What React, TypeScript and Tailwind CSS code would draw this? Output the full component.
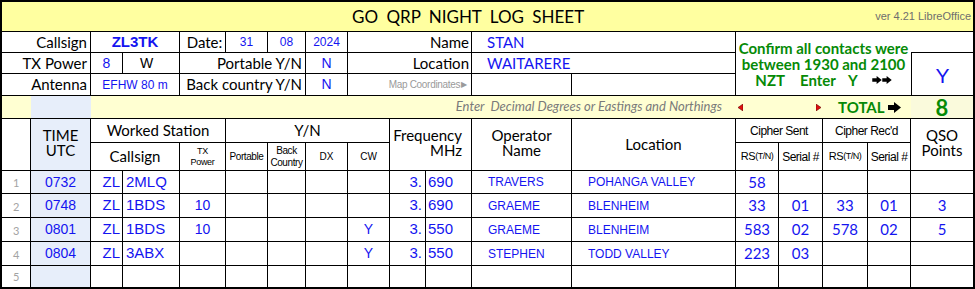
import React from 'react';

const CAL = "font-['Lato','Open_Sans',sans-serif]";
const ARIAL = "font-['Liberation_Sans','Arial',sans-serif]";
const line = 'border-r border-b border-black';
const blue = 'text-[#1414f0]';
const green = 'text-[#068a06]';
const bandBg = 'bg-[#ffffd2]';
const timeBg = 'bg-[#e7eefa]';

// Log entries - row 5 is left blank on the sheet
const rows = [
  { n: 1, time: '0732', call: '2MLQ', tx: '', cw: '', f: '690', op: 'TRAVERS', loc: 'POHANGA VALLEY', rs: '58', ss: '', rr: '', sr: '', pts: '' },
  { n: 2, time: '0748', call: '1BDS', tx: '10', cw: '', f: '690', op: 'GRAEME', loc: 'BLENHEIM', rs: '33', ss: '01', rr: '33', sr: '01', pts: '3' },
  { n: 3, time: '0801', call: '1BDS', tx: '10', cw: 'Y', f: '550', op: 'GRAEME', loc: 'BLENHEIM', rs: '583', ss: '02', rr: '578', sr: '02', pts: '5' },
  { n: 4, time: '0804', call: '3ABX', tx: '', cw: 'Y', f: '550', op: 'STEPHEN', loc: 'TODD VALLEY', rs: '223', ss: '03', rr: '', sr: '', pts: '' },
  { n: 5, time: '', call: '', tx: '', cw: '', f: '', op: '', loc: '', rs: '', ss: '', rr: '', sr: '', pts: '' },
];

const rowStart = ['row-start-8', 'row-start-9', 'row-start-10', 'row-start-11', 'row-start-12'];

function Arrow({ w = 13, h = 11 }: { w?: number; h?: number }) {
  return (
    <svg width={w} height={h} viewBox="0 0 13 11" className="inline-block">
      <polygon points="0,3 6,3 6,0 13,5.5 6,11 6,8 0,8" fill="#000" />
    </svg>
  );
}

function Tri({ dir }: { dir: 'l' | 'r' }) {
  return (
    <svg width="5" height="7" viewBox="0 0 5 7">
      <polygon
        points={dir === 'l' ? '5,0 0,3.5 5,7' : '0,0 5,3.5 0,7'}
        fill="#e01010"
        stroke="#600"
        strokeWidth="0.6"
      />
    </svg>
  );
}

export default function App() {
  return (
    <div className="w-[975px] h-[289px] bg-white border-2 border-black">
      <div className="grid grid-cols-[29px_60px_32px_57px_46px_42px_38px_42px_42px_36px_46px_100px_164px_43px_44px_45px_43px_62px] grid-rows-[30px_21px_21px_22px_23px_24px_28px_23px_24px_24px_24px_21px]">
        {/* Title */}
        <div className="col-start-1 col-end-19 row-start-1 flex items-center border-b border-black bg-[#ffffa0]">
          <span className={`${CAL} pl-[350px] text-[17px] [word-spacing:4px] text-black`}>
            GO QRP NIGHT LOG SHEET
          </span>
          <span className={`${ARIAL} ml-auto pr-[2px] text-[11px] text-[#6e6e6e]`}>ver 4.21 LibreOffice</span>
        </div>

        {/* Header block: row 1 */}
        <div className={`col-start-1 col-end-3 row-start-2 ${line} ${CAL} flex items-center justify-end pr-[3px] text-[15px]`}>Callsign</div>
        <div className={`col-start-3 col-end-5 row-start-2 ${line} ${ARIAL} ${blue} flex items-center justify-center text-[15px] font-bold`}>ZL3TK</div>
        <div className={`col-start-5 col-end-6 row-start-2 ${line} ${CAL} flex items-center justify-center pl-[4px] text-[15px]`}>Date:</div>
        <div className={`col-start-6 col-end-7 row-start-2 ${line} ${ARIAL} ${blue} flex items-center justify-center text-[12px]`}>31</div>
        <div className={`col-start-7 col-end-8 row-start-2 ${line} ${ARIAL} ${blue} flex items-center justify-center text-[12px]`}>08</div>
        <div className={`col-start-8 col-end-9 row-start-2 ${line} ${ARIAL} ${blue} flex items-center justify-center text-[12px]`}>2024</div>
        <div className={`col-start-9 col-end-12 row-start-2 ${line} ${CAL} flex items-center justify-end pr-[2px] text-[15px]`}>Name</div>
        <div className={`col-start-12 col-end-14 row-start-2 ${line} ${CAL} ${blue} flex items-center pl-[15px] text-[15px]`}>STAN</div>

        {/* row 2 */}
        <div className={`col-start-1 col-end-3 row-start-3 ${line} ${CAL} flex items-center justify-end pr-[3px] text-[15px]`}>TX Power</div>
        <div className={`col-start-3 col-end-4 row-start-3 ${line} ${ARIAL} ${blue} flex items-center justify-center text-[14px]`}>8</div>
        <div className={`col-start-4 col-end-5 row-start-3 ${line} ${ARIAL} flex items-center justify-center pr-[9px] text-[14px]`}>W</div>
        <div className={`col-start-5 col-end-8 row-start-3 ${line} ${CAL} flex items-center justify-end pr-[3px] text-[15px]`}>Portable Y/N</div>
        <div className={`col-start-8 col-end-9 row-start-3 ${line} ${ARIAL} ${blue} flex items-center justify-center text-[14px]`}>N</div>
        <div className={`col-start-9 col-end-12 row-start-3 ${line} ${CAL} flex items-center justify-end pr-[2px] text-[15px]`}>Location</div>
        <div className={`col-start-12 col-end-14 row-start-3 ${line} ${CAL} ${blue} flex items-center pl-[15px] text-[15px]`}>WAITARERE</div>

        {/* row 3 */}
        <div className={`col-start-1 col-end-3 row-start-4 ${line} ${CAL} flex items-center justify-end pr-[3px] text-[15px]`}>Antenna</div>
        <div className={`col-start-3 col-end-5 row-start-4 ${line} ${ARIAL} ${blue} flex items-center justify-center text-[12px]`}>EFHW 80 m</div>
        <div className={`col-start-5 col-end-8 row-start-4 ${line} ${CAL} flex items-center justify-end pr-[3px] text-[15px]`}>Back country Y/N</div>
        <div className={`col-start-8 col-end-9 row-start-4 ${line} ${ARIAL} ${blue} flex items-center justify-center text-[14px]`}>N</div>
        <div className={`col-start-9 col-end-12 row-start-4 ${line} ${ARIAL} flex items-center justify-end gap-[1px] pr-[4px] text-[10px] tracking-[-0.3px] text-[#9a9a9a]`}>
          Map Coordinates <span className="text-[8px]">▶</span>
        </div>
        <div className={`col-start-12 col-end-13 row-start-4 ${line}`} />
        <div className={`col-start-13 col-end-14 row-start-4 ${line}`} />

        {/* confirmation note + Y box */}
        <div className={`col-start-14 col-end-18 row-start-2 row-end-5 border-b border-black ${CAL} ${green} flex flex-col items-center justify-center text-[15px] font-bold leading-[16px]`}>
          <span>Confirm all contacts were</span>
          <span>between 1930 and 2100</span>
          <span className="flex items-center">
            NZT<span className="ml-[15px]">Enter</span>
            <span className="ml-[12px]">Y</span>
            <span className="ml-[14px] flex">
              <Arrow w={10} h={8} />
              <Arrow w={10} h={8} />
            </span>
          </span>
        </div>
        <div className="col-start-18 col-end-19 row-start-2 border-b border-black" />
        <div className={`col-start-18 col-end-19 row-start-3 row-end-5 border-l border-b border-black ${ARIAL} ${blue} flex items-center justify-center pt-[3px] text-[21px]`}>Y</div>

        {/* band row */}
        <div className={`col-start-1 col-end-2 row-start-5 border-b border-black ${bandBg}`} />
        <div className={`col-start-2 col-end-3 row-start-5 border-b border-black ${timeBg}`} />
        <div className={`col-start-3 col-end-14 row-start-5 border-b border-black ${bandBg} ${CAL} flex items-center justify-end pr-[14px] text-[13px] italic text-[#7a7a7a]`}>
          Enter&nbsp; Decimal Degrees or Eastings and Northings
        </div>
        <div className={`col-start-14 col-end-16 row-start-5 border-b border-black ${bandBg} flex items-center justify-between px-[2px]`}>
          <Tri dir="l" />
          <Tri dir="r" />
        </div>
        <div className={`col-start-16 col-end-18 row-start-5 border-b border-black ${bandBg} ${CAL} ${green} flex items-center gap-[3px] pl-[15px] text-[15px] font-bold`}>
          TOTAL <Arrow />
        </div>
        <div className={`col-start-18 col-end-19 row-start-5 border-b border-black bg-[#fafadc] ${CAL} ${green} flex items-center justify-center text-[22px] font-bold`}>8</div>

        {/* table headings */}
        <div className={`col-start-1 col-end-2 row-start-6 row-end-8 ${line}`} />
        <div className={`col-start-2 col-end-3 row-start-6 row-end-8 ${line} ${timeBg} ${CAL} flex items-center justify-center pb-[4px] text-center text-[15px] leading-[15px]`}>
          TIME<br />UTC
        </div>
        <div className={`col-start-3 col-end-6 row-start-6 ${line} ${CAL} flex items-center justify-center text-[15px]`}>Worked Station</div>
        <div className={`col-start-6 col-end-10 row-start-6 ${line} ${CAL} flex items-center justify-center text-[15px]`}>Y/N</div>
        <div className={`col-start-10 col-end-12 row-start-6 row-end-8 ${line} ${CAL} flex items-center justify-end pb-[4px] pr-[9px] text-right text-[15px] leading-[15px]`}>
          Frequency<br />MHz
        </div>
        <div className={`col-start-12 col-end-13 row-start-6 row-end-8 ${line} ${CAL} flex items-center justify-center pb-[4px] text-center text-[15px] leading-[15px]`}>
          Operator<br />Name
        </div>
        <div className={`col-start-13 col-end-14 row-start-6 row-end-8 ${line} ${CAL} flex items-center justify-center text-[15px]`}>Location</div>
        <div className={`col-start-14 col-end-16 row-start-6 ${line} ${ARIAL} flex items-center justify-center text-[12px] tracking-[-0.5px]`}>Cipher Sent</div>
        <div className={`col-start-16 col-end-18 row-start-6 ${line} ${ARIAL} flex items-center justify-center text-[12px] tracking-[-0.5px]`}>Cipher Rec'd</div>
        <div className={`col-start-18 col-end-19 row-start-6 row-end-8 border-b border-black ${CAL} flex items-center justify-center pb-[4px] text-center text-[15px] leading-[15px]`}>
          QSO<br />Points
        </div>

        <div className={`col-start-3 col-end-5 row-start-7 ${line} ${CAL} flex items-center justify-center text-[15px]`}>Callsign</div>
        <div className={`col-start-5 col-end-6 row-start-7 ${line} ${ARIAL} flex items-center justify-center text-center text-[9px] leading-[11px] tracking-[-0.3px]`}>
          TX<br />Power
        </div>
        <div className={`col-start-6 col-end-7 row-start-7 ${line} ${ARIAL} flex items-center justify-center text-[10px] tracking-[-0.4px]`}>Portable</div>
        <div className={`col-start-7 col-end-8 row-start-7 ${line} ${ARIAL} flex items-center justify-center text-center text-[10px] leading-[12px] tracking-[-0.4px]`}>
          Back<br />Country
        </div>
        <div className={`col-start-8 col-end-9 row-start-7 ${line} ${ARIAL} flex items-center justify-center text-[10px]`}>DX</div>
        <div className={`col-start-9 col-end-10 row-start-7 ${line} ${ARIAL} flex items-center justify-center text-[10px]`}>CW</div>
        <div className={`col-start-14 col-end-15 row-start-7 ${line} ${ARIAL} flex items-center justify-center text-[11px] tracking-[-0.5px]`}>
          RS<span className="text-[9px]">(T/N)</span>
        </div>
        <div className={`col-start-15 col-end-16 row-start-7 ${line} ${ARIAL} flex items-center justify-center text-[12px] tracking-[-0.5px]`}>Serial #</div>
        <div className={`col-start-16 col-end-17 row-start-7 ${line} ${ARIAL} flex items-center justify-center text-[11px] tracking-[-0.5px]`}>
          RS<span className="text-[9px]">(T/N)</span>
        </div>
        <div className={`col-start-17 col-end-18 row-start-7 ${line} ${ARIAL} flex items-center justify-center text-[12px] tracking-[-0.5px]`}>Serial #</div>

        {/* log rows */}
        {rows.map((r, i) => {
          const rs = rowStart[i];
          const last = i === rows.length - 1;
          const cell = last ? 'border-r border-black' : line;
          const cellEnd = last ? '' : 'border-b border-black';
          const data = `${rs} ${cell} flex items-center`;
          return (
            <React.Fragment key={r.n}>
              <div className={`${rs} ${cell} ${CAL} flex items-end pb-[2px] pl-[11px] text-[11px] text-[#a3a3a3]`}>{r.n}</div>
              <div className={`${data} ${timeBg} ${ARIAL} ${blue} justify-center text-[14px]`}>{r.time}</div>
              <div className={`${data} ${ARIAL} ${blue} justify-end pr-[2px] text-[15px]`}>{r.time ? 'ZL' : ''}</div>
              <div className={`${data} ${ARIAL} ${blue} pl-[3px] text-[15px]`}>{r.call}</div>
              <div className={`${data} ${ARIAL} ${blue} justify-center text-[14px]`}>{r.tx}</div>
              <div className={data} />
              <div className={data} />
              <div className={data} />
              <div className={`${data} ${ARIAL} ${blue} justify-center text-[14px]`}>{r.cw}</div>
              <div className={`${data} ${ARIAL} ${blue} justify-end pr-[3px] text-[15px]`}>{r.f ? '3.' : ''}</div>
              <div className={`${data} ${ARIAL} ${blue} pl-[2px] text-[15px]`}>{r.f}</div>
              <div className={`${data} ${ARIAL} ${blue} pl-[16px] text-[12px]`}>{r.op}</div>
              <div className={`${data} ${ARIAL} ${blue} pl-[16px] text-[12px]`}>{r.loc}</div>
              <div className={`${data} ${CAL} ${blue} justify-center text-[15px]`}>{r.rs}</div>
              <div className={`${data} ${CAL} ${blue} justify-center text-[15px]`}>{r.ss}</div>
              <div className={`${data} ${CAL} ${blue} justify-center text-[15px]`}>{r.rr}</div>
              <div className={`${data} ${CAL} ${blue} justify-center text-[15px]`}>{r.sr}</div>
              <div className={`${rs} ${cellEnd} ${CAL} ${blue} flex items-center justify-center text-[15px]`}>{r.pts}</div>
            </React.Fragment>
          );
        })}
      </div>
    </div>
  );
}
